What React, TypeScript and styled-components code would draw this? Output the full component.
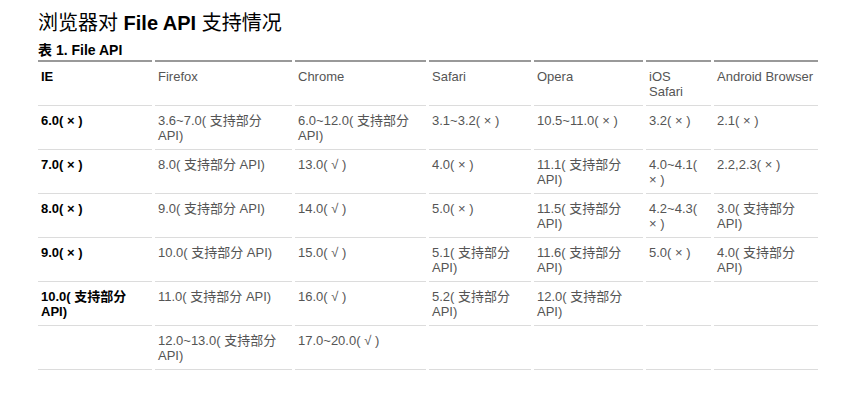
import React from 'react';
import styled, { createGlobalStyle } from 'styled-components';

const GlobalStyle = createGlobalStyle`
  body {
    margin: 0;
    background: #fff;
    font-family: "Liberation Sans", "Noto Sans CJK SC", sans-serif;
  }
`;

const Page = styled.div`
  padding: 11px 0 0 38px;
`;

const Title = styled.h2`
  margin: 0 0 7px;
  font-size: 20px;
  line-height: 24px;
  font-weight: 700;
  color: #000;
`;

const Han = styled.span`
  font-weight: 400;
`;

const Caption = styled.div`
  font-size: 14px;
  line-height: 16px;
  font-weight: 700;
  color: #000;
  margin-bottom: 2px;
`;

const Table = styled.table`
  margin-left: -3px;
  border-collapse: separate;
  border-spacing: 3px 0;
  table-layout: fixed;
  width: 786px;
  font-size: 13px;
  line-height: 15px;
`;

const Cell = styled.td<{ $lead?: boolean }>`
  height: 30px;
  padding: 7px 4px 6px 3px;
  vertical-align: top;
  text-align: left;
  border-bottom: 1px solid #dcdcdc;
  color: ${({ $lead }) => ($lead ? '#000' : '#555')};
  font-weight: ${({ $lead }) => ($lead ? 700 : 400)};
`;

const HeadCell = styled(Cell).attrs({ as: 'th' })`
  border-top: 2px solid #999;
`;

const columns = [
  { name: 'IE', width: 114 },
  { name: 'Firefox', width: 137 },
  { name: 'Chrome', width: 131 },
  { name: 'Safari', width: 102 },
  { name: 'Opera', width: 109 },
  { name: 'iOS Safari', width: 65 },
  { name: 'Android Browser', width: 104 },
];

const rows: string[][] = [
  ['6.0( × )', '3.6~7.0( 支持部分 API)', '6.0~12.0( 支持部分 API)', '3.1~3.2( × )', '10.5~11.0( × )', '3.2( × )', '2.1( × )'],
  ['7.0( × )', '8.0( 支持部分 API)', '13.0( √ )', '4.0( × )', '11.1( 支持部分 API)', '4.0~4.1( × )', '2.2,2.3( × )'],
  ['8.0( × )', '9.0( 支持部分 API)', '14.0( √ )', '5.0( × )', '11.5( 支持部分 API)', '4.2~4.3( × )', '3.0( 支持部分 API)'],
  ['9.0( × )', '10.0( 支持部分 API)', '15.0( √ )', '5.1( 支持部分 API)', '11.6( 支持部分 API)', '5.0( × )', '4.0( 支持部分 API)'],
  ['10.0( 支持部分 API)', '11.0( 支持部分 API)', '16.0( √ )', '5.2( 支持部分 API)', '12.0( 支持部分 API)', '', ''],
  ['', '12.0~13.0( 支持部分 API)', '17.0~20.0( √ )', '', '', '', ''],
];

export default function App() {
  return (
    <Page>
      <GlobalStyle />
      <Title>
        <Han>浏览器对</Han> File API <Han>支持情况</Han>
      </Title>
      <Caption>表 1. File API</Caption>
      <Table>
        <colgroup>
          {columns.map((c) => (
            <col key={c.name} style={{ width: c.width + 'px' }} />
          ))}
        </colgroup>
        <thead>
          <tr>
            {columns.map((c, i) => (
              <HeadCell key={c.name} $lead={i === 0}>
                {c.name}
              </HeadCell>
            ))}
          </tr>
        </thead>
        <tbody>
          {rows.map((row, r) => (
            <tr key={r}>
              {row.map((text, i) => (
                <Cell key={i} $lead={i === 0}>
                  {text}
                </Cell>
              ))}
            </tr>
          ))}
        </tbody>
      </Table>
    </Page>
  );
}
